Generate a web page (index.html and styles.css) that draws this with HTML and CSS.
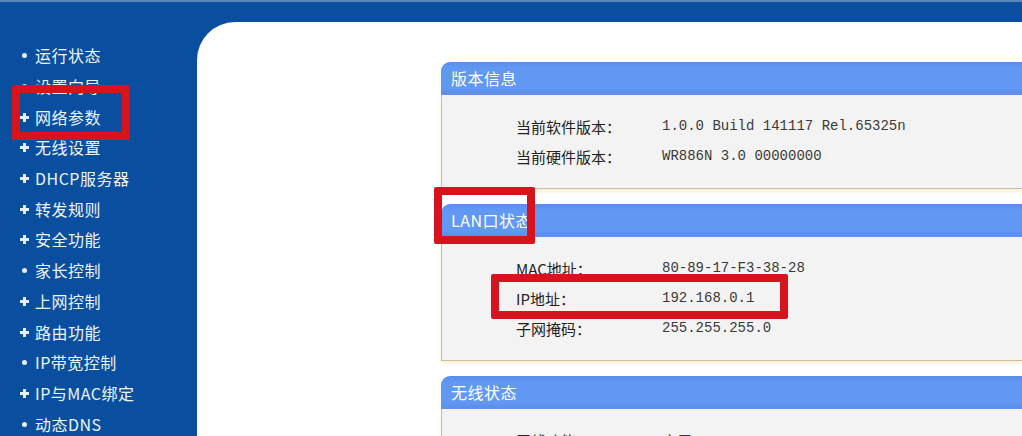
FILE: index.html
```html
<!DOCTYPE html>
<html lang="zh-CN">
<head>
    <meta charset="UTF-8">
    <meta name="viewport" content="width=device-width, initial-scale=1.0">
    <title>运行状态</title>
    <link rel="stylesheet" href="styles.css">
</head>
<body>
    <div class="page">
        <ul class="menu">
            <li><span class="dot"></span>运行状态</li>
            <li><span class="dot"></span>设置向导</li>
            <li><span class="plus"></span>网络参数</li>
            <li><span class="plus"></span>无线设置</li>
            <li><span class="plus"></span>DHCP服务器</li>
            <li><span class="plus"></span>转发规则</li>
            <li><span class="plus"></span>安全功能</li>
            <li><span class="dot"></span>家长控制</li>
            <li><span class="plus"></span>上网控制</li>
            <li><span class="plus"></span>路由功能</li>
            <li><span class="dot"></span>IP带宽控制</li>
            <li><span class="plus"></span>IP与MAC绑定</li>
            <li><span class="dot"></span>动态DNS</li>
        </ul>

        <div class="main">
            <div class="panel">
                <div class="panel-head">版本信息</div>
                <div class="panel-body">
                    <div class="row"><span class="label">当前软件版本：</span><span class="value">1.0.0 Build 141117 Rel.65325n</span></div>
                    <div class="row"><span class="label">当前硬件版本：</span><span class="value">WR886N 3.0 00000000</span></div>
                </div>
            </div>

            <div class="panel">
                <div class="panel-head">LAN口状态</div>
                <div class="panel-body">
                    <div class="row"><span class="label">MAC地址：</span><span class="value">80-89-17-F3-38-28</span></div>
                    <div class="row"><span class="label">IP地址：</span><span class="value">192.168.0.1</span></div>
                    <div class="row"><span class="label">子网掩码：</span><span class="value">255.255.255.0</span></div>
                </div>
            </div>

            <div class="panel">
                <div class="panel-head">无线状态</div>
                <div class="panel-body">
                    <div class="row"><span class="label">无线功能：</span><span class="value cjk">启用</span></div>
                </div>
            </div>
        </div>

        <!-- red annotation boxes -->
        <div class="mark mark-menu"></div>
        <div class="mark mark-lan"></div>
        <div class="mark mark-ip"></div>
    </div>
</body>
</html>
```

FILE: styles.css
```css
body {
    margin: 0;
    font-family: "Noto Sans CJK SC", sans-serif;
    background: #0a4f9f;
    overflow: hidden;
}
.page {
    position: relative;
    display: flex;
    height: 436px;
    border-top: 2px solid #5a86b8;
    box-sizing: border-box;
}
.menu {
    width: 197px;
    flex-shrink: 0;
    margin: 0;
    padding: 38px 0 0 0;
    list-style: none;
}
.menu li {
    display: flex;
    align-items: center;
    height: 30.7px;
    color: #eef4ff;
    font-size: 16px;
    letter-spacing: 0.5px;
}
.menu li span {
    width: 35px;
    flex-shrink: 0;
    position: relative;
    height: 10px;
}
.dot::after {
    content: "";
    position: absolute;
    left: 22px;
    top: 3px;
    width: 5px;
    height: 5px;
    border-radius: 50%;
    background: #e6efff;
}
.plus::before,
.plus::after {
    content: "";
    position: absolute;
    background: #e6efff;
}
.plus::before {
    left: 20px;
    top: 4px;
    width: 9px;
    height: 3px;
}
.plus::after {
    left: 23px;
    top: 1px;
    width: 3px;
    height: 9px;
}
.main {
    flex: 1;
    margin-top: 20px;
    background: #fff;
    border-top-left-radius: 38px;
    padding: 40px 0 0 244px;
}
.panel {
    margin-bottom: 15px;
}
.panel-head {
    height: 33px;
    line-height: 33px;
    padding-left: 10px;
    color: #fff;
    font-size: 16px;
    letter-spacing: 0.5px;
    background: linear-gradient(#5a8fe9, #6098f4 20%, #6098f4 80%, #5b8ee6);
    border-top-left-radius: 9px;
}
.panel-body {
    background: #f3f3f3;
    border-left: 1px solid #cdbd98;
    border-bottom: 1px solid #cdbd98;
    padding: 16px 0 17px 74px;
    box-shadow: 0 3px 4px #f6f0da;
}
.row {
    display: flex;
    align-items: center;
    height: 30px;
}
.label {
    width: 146px;
    flex-shrink: 0;
    font-size: 15px;
    color: #222;
}
.value {
    font-family: "Liberation Mono", monospace;
    font-size: 14px;
    color: #3a3a3a;
}
.value.cjk {
    font-family: "Noto Sans CJK SC", sans-serif;
    font-size: 15px;
}
.mark {
    position: absolute;
    border: 8px solid #d7131d;
    border-radius: 2px;
}
.mark-menu {
    left: 12px;
    top: 83px;
    width: 102px;
    height: 39px;
}
.mark-lan {
    left: 434px;
    top: 185px;
    width: 85px;
    height: 41px;
}
.mark-ip {
    left: 491px;
    top: 272px;
    width: 281px;
    height: 29px;
}
```
